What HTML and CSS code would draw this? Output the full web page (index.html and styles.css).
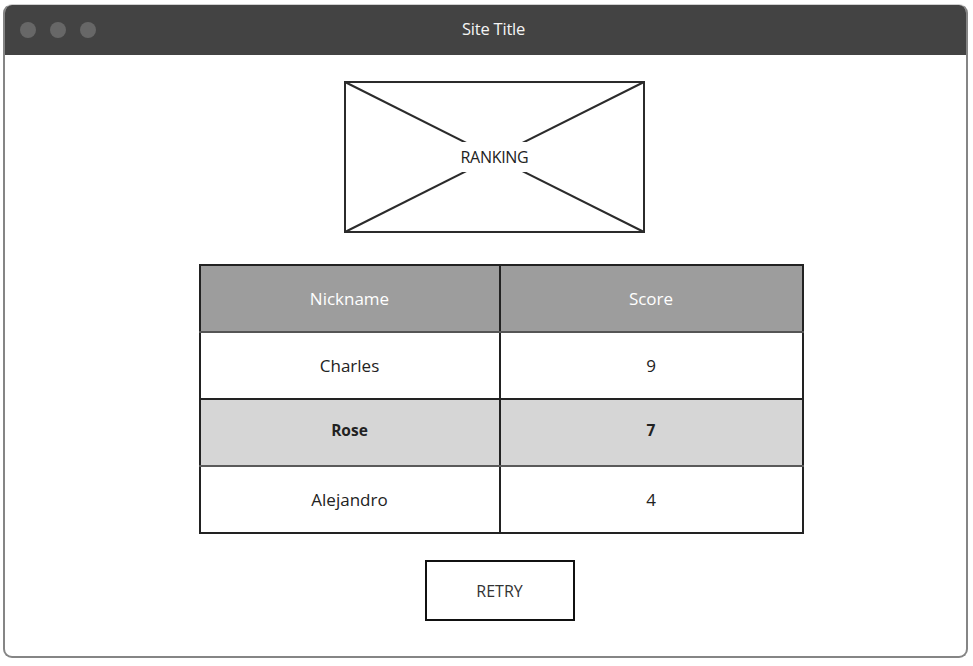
FILE: index.html
```html
<!DOCTYPE html>
<html lang="en">
<head>
<meta charset="utf-8">
<title>Site Title</title>
<link rel="stylesheet" href="styles.css">
</head>
<body>
<div class="window">
  <div class="titlebar">
    <div class="dots"><span class="dot"></span><span class="dot"></span><span class="dot"></span></div>
    <div class="title">Site Title</div>
  </div>
  <div class="content">
    <div class="placeholder">
      <svg class="ph-lines" viewBox="0 0 301 151" preserveAspectRatio="none" width="301" height="151">
        <rect x="1" y="1" width="299" height="149" fill="#fff" stroke="#2b2b2b" stroke-width="2"/>
        <line x1="1" y1="1" x2="300" y2="150" stroke="#2b2b2b" stroke-width="2"/>
        <line x1="300" y1="1" x2="1" y2="150" stroke="#2b2b2b" stroke-width="2"/>
      </svg>
      <span class="ph-label">RANKING</span>
    </div>
    <table class="ranking">
      <thead>
        <tr><th class="c1">Nickname</th><th class="c2">Score</th></tr>
      </thead>
      <tbody>
        <tr><td>Charles</td><td>9</td></tr>
        <tr class="hl"><td>Rose</td><td>7</td></tr>
        <tr><td>Alejandro</td><td>4</td></tr>
      </tbody>
    </table>
    <button class="retry">RETRY</button>
  </div>
</div>
</body>
</html>
```
FILE: styles.css
```css
* { box-sizing: border-box; }
html, body { margin: 0; padding: 0; background: #fff; }
body {
  font-family: "Source Sans Pro", "Open Sans", "Noto Sans", sans-serif;
  padding: 4px 5px 8px 3px;
}
.window {
  height: 654px;
  border: 2px solid #858585;
  border-top: 1px solid #d0d0d0;
  border-radius: 9px;
  overflow: hidden;
  display: flex;
  flex-direction: column;
}
.titlebar {
  height: 50px;
  background: #434343;
  display: grid;
  grid-template-columns: 1fr;
  align-items: center;
  flex: none;
}
.dots, .title { grid-area: 1 / 1; }
.dots { display: flex; gap: 14px; padding-left: 15px; }
.dot { width: 16px; height: 16px; border-radius: 50%; background: #676767; }
.title {
  text-align: center;
  color: #f4f4f4;
  font-size: 16.5px;
  padding-left: 16px;
  padding-bottom: 3px;
  letter-spacing: -0.2px;
}
.content {
  display: flex;
  flex-direction: column;
  align-items: center;
  padding-top: 26px;
}
.placeholder {
  display: grid;
  width: 301px;
  height: 152px;
  place-items: center;
  margin-left: 18px;
}
.ph-lines, .ph-label { grid-area: 1 / 1; }
.ph-lines { display: block; width: 301px; height: 152px; }
.ph-label {
  background: #fff;
  font-size: 16px;
  color: #222;
  padding: 4px 2px;
  letter-spacing: -0.3px;
}
.ranking {
  margin-top: 31px;
  border-collapse: collapse;
  width: 605px;
  table-layout: fixed;
  font-size: 17px;
  color: #222;
  margin-left: 31px;
}
.ranking th, .ranking td {
  border: 2px solid #222;
  height: 67px;
  text-align: center;
  padding: 0;
}
.ranking .c1 { width: 300px; }
.ranking th {
  background: #9d9d9d;
  color: #fff;
  font-weight: normal;
  border-bottom-color: #555;
}
.ranking tr.hl td {
  background: #d6d6d6;
  font-weight: bold;
  font-size: 15.5px;
  padding-bottom: 5px;
  border-bottom-color: #5a5a5a;
}
.retry {
  margin-top: 26px;
  width: 150px;
  height: 61px;
  background: #fff;
  border: 2px solid #111;
  font-family: inherit;
  font-size: 16px;
  color: #333;
  margin-left: 28px;
}
```
